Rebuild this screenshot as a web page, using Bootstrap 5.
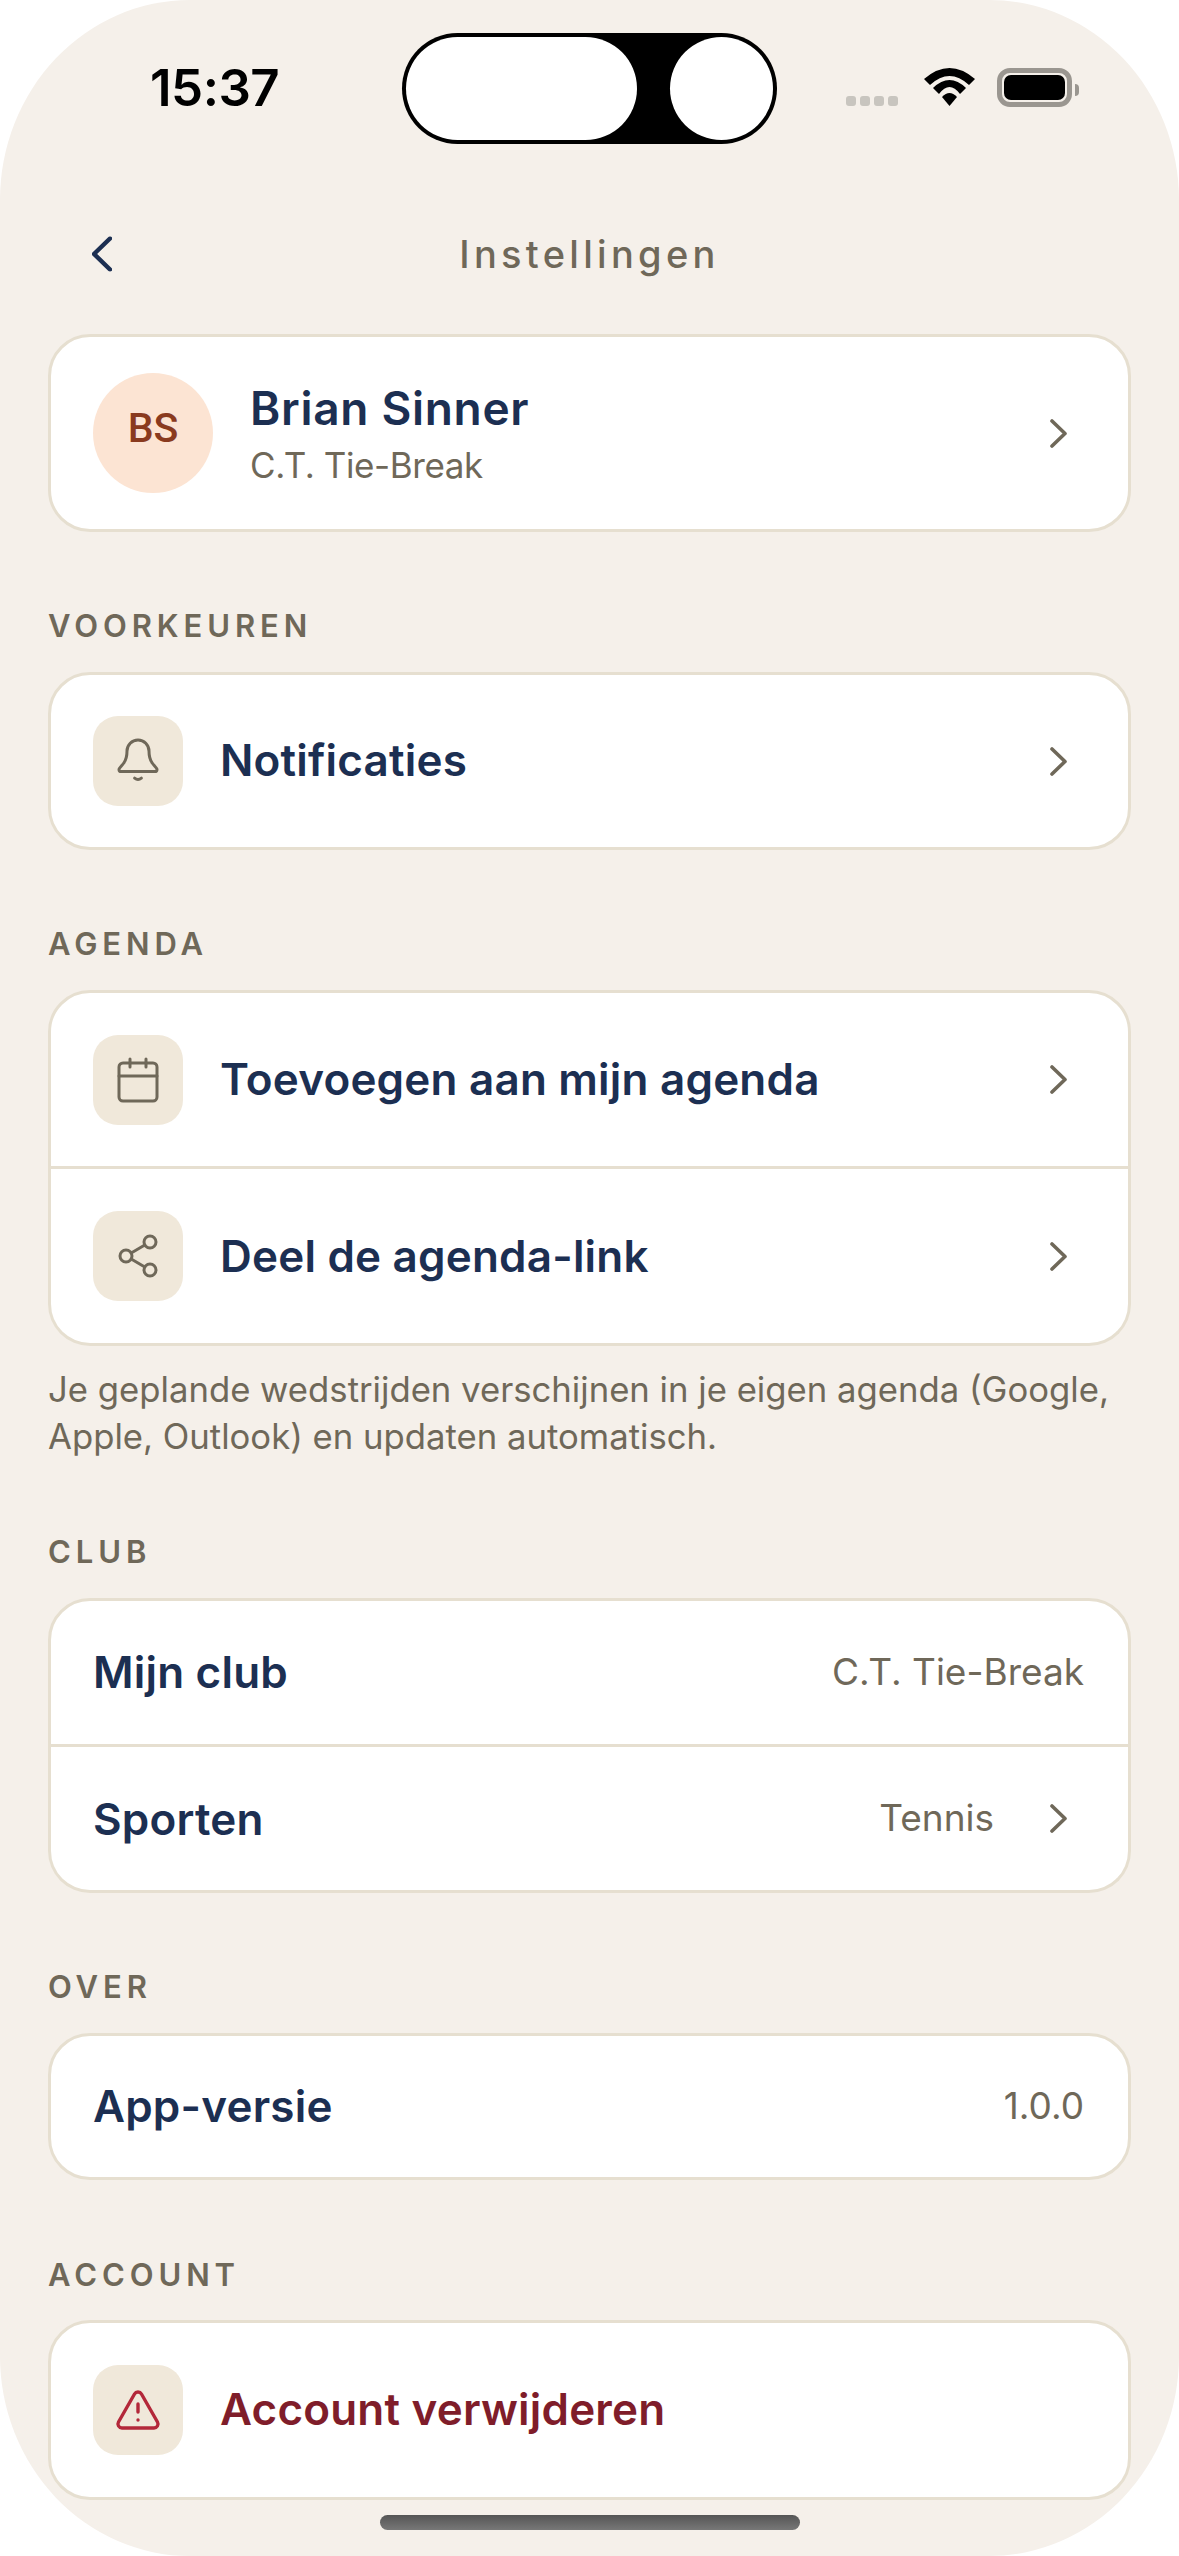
<!DOCTYPE html>
<html lang="nl">
<head>
  <meta charset="utf-8"/>
  <link href="https://cdn.jsdelivr.net/npm/bootstrap@5.3.0/dist/css/bootstrap.min.css" rel="stylesheet">
  <meta name="viewport" content="width=device-width, initial-scale=1.0"/>
  <title>Instellingen</title>
  <style>
    html, body { margin: 0; background: #fff; }
    body { font-family: Inter, "Noto Sans", sans-serif; color: #1c2f52; }
    .phone { width: 1179px; height: 2556px; background: #f5f0ea; border-radius: 190px / 200px; overflow: hidden; padding: 33px 48px 0; }
    .statusbar { display: grid; grid-template-columns: 1fr 375px 1fr; height: 111px; margin: 0 -48px; padding: 0 48px; }
    .clock { font-size: 51px; font-weight: 600; color: #000; padding-left: 102px; line-height: 1; padding-top: 29px; letter-spacing: -.5px; }
    .island { background: #000; border-radius: 56px; padding: 4px; }
    .island-pill { width: 231px; height: 103px; background: #fff; border-radius: 52px; }
    .island-dot { width: 103px; height: 103px; background: #fff; border-radius: 50%; }
    .status-icons { padding-top: 35px; padding-left: 69px; }
    .sig-dots { margin-top: 28px; margin-right: 26px; }
    .sig-dot { width: 10px; height: 10px; background: #c8c5bf; border-radius: 3px; }
    .wifi { margin-right: 22px; }
    .batt { width: 75px; height: 39px; border: 5px solid #9a9690; border-radius: 13px; padding: 2px; }
    .batt-fill { height: 100%; background: #000; border-radius: 7px; }
    .batt-nub { width: 4px; height: 12px; background: #9a9690; border-radius: 0 6px 6px 0; margin-left: 3px; }
    .topbar { height: 80px; margin-top: 70px; position: relative; }
    .page-title { font-size: 38px; font-weight: 500; letter-spacing: 4.3px; color: #6f6859; line-height: 80px; }
    .panel.list-group { --bs-list-group-bg: #fff; --bs-list-group-border-color: #e6dfd0; --bs-list-group-border-width: 3px; --bs-list-group-border-radius: 42px; }
    .panel .list-group-item { display: flex; align-items: center; padding: 0 61px 0 42px; }
    .panel-profile { margin-top: 40px; }
    .panel-profile .list-group-item { height: 198px; }
    .list-group-item.row-icon { height: 178px; }
    .list-group-item.row-icon.row-first { height: 179px; }
    .list-group-item.row-icon.row-second { height: 177px; }
    .list-group-item.row-icon.row-tall { height: 180px; }
    .panel .list-group-item.row-plain { height: 147px; padding-right: 44px; }
    .panel .list-group-item.row-plain.row-first { height: 149px; }
    .panel .list-group-item.row-plain.row-second { height: 146px; padding-right: 61px; }
    .avatar { width: 120px; height: 120px; border-radius: 50%; background: #fce4d3; color: #8a3a1e; font-family: Roboto, sans-serif; font-weight: 500; font-size: 41px; margin-right: 37px; padding-bottom: 8px; }
    .profile-name { font-size: 46px; font-weight: 600; letter-spacing: .7px; line-height: 56px; color: #1c2f52; margin-top: 2px; }
    .profile-club { font-size: 35px; letter-spacing: -.4px; line-height: 48px; color: #6f6859; margin-top: 5px; }
    .icon-box { width: 90px; height: 90px; background: #f0e8da; border-radius: 25px; margin-right: 37px; flex-shrink: 0; }
    .icon-box svg { width: 48px; height: 48px; fill: none; stroke: #6f6859; stroke-width: 1.5; stroke-linecap: round; stroke-linejoin: round; }
    .row-text { font-size: 44px; font-weight: 600; letter-spacing: .2px; color: #1c2f52; margin-top: -2px; }
    .row-second .row-text { margin-top: 0; }
    .row-danger { color: #7f1d2a; }
    .icon-box svg.icon-alert { stroke: #b3283a; stroke-width: 1.7; }
    .row-value { font-size: 37px; color: #6f6859; margin-top: -2px; }
    .chev { width: 17px; height: 29px; fill: none; stroke: #6f6859; stroke-width: 3.6; stroke-linecap: round; stroke-linejoin: round; margin-left: auto; flex-shrink: 0; }
    .chev-after { margin-left: 56px; }
    .section-block { margin-top: 74px; }
    .section-label { font-size: 31px; font-weight: 600; letter-spacing: 4.9px; color: #6f6859; line-height: 40px; margin-bottom: 26px; }
    .section-last { margin-top: 75px; }
    .section-last .section-label { margin-bottom: 25px; }
    .panel-note { font-size: 34.7px; line-height: 47px; color: #6f6859; margin: 20px 0 -2px; }
    .home-bar { width: 420px; height: 15px; border-radius: 8px; background: linear-gradient(#555, #777); margin: 15px auto 0; }
  </style>
</head>
<body>
<div class="phone">
  <div class="statusbar">
    <div class="clock">15:37</div>
    <div class="island d-flex justify-content-between">
      <div class="island-pill"></div>
      <div class="island-dot"></div>
    </div>
    <div class="status-icons d-flex align-items-start">
      <div class="sig-dots d-flex gap-1">
        <span class="sig-dot"></span><span class="sig-dot"></span><span class="sig-dot"></span><span class="sig-dot"></span>
      </div>
      <svg class="wifi" width="51" height="38" viewBox="0 0 51 38"><path d="M0 11Q25.5-11 51 11L45 17Q25.5-1 6 17Z"/><path d="M9 20Q25.5 4 42 20L36 26Q25.5 12 15 26Z"/><path d="M18 29Q25.5 21 33 29L25.5 38Z"/></svg>
      <div class="batt"><div class="batt-fill"></div></div>
      <div class="batt-nub mt-3"></div>
    </div>
  </div>

  <div class="topbar d-flex align-items-center justify-content-center">
    <svg class="position-absolute top-50 start-0 translate-middle-y" style="margin-left:44px" width="20" height="35" viewBox="0 0 20 35" fill="none" stroke="#1c2f52" stroke-width="4.5" stroke-linecap="round" stroke-linejoin="round"><path d="M18 2L2 17.5L18 33"/></svg>
    <div class="page-title">Instellingen</div>
  </div>

  <div class="panel panel-profile list-group">
    <div class="list-group-item">
      <div class="avatar d-flex align-items-center justify-content-center">BS</div>
      <div>
        <div class="profile-name">Brian Sinner</div>
        <div class="profile-club">C.T. Tie-Break</div>
      </div>
      <svg class="chev" viewBox="0 0 17 29"><path d="M2 2L15 14.5L2 27"/></svg>
    </div>
  </div>

  <div class="section-block">
    <div class="section-label">VOORKEUREN</div>
    <div class="panel list-group">
      <div class="list-group-item row-icon">
        <div class="icon-box d-flex align-items-center justify-content-center">
          <svg viewBox="0 0 24 24"><path d="M12 1.5a5.5 5.5 0 0 0-5.5 5.5c0 2.8-.6 4.6-1.6 6-.7 1-2.4 2.5-2.4 3.2 0 .6.5 1.1 1.1 1.1h16.8c.6 0 1.1-.5 1.1-1.1 0-.7-1.7-2.2-2.4-3.2-1-1.4-1.6-3.2-1.6-6A5.5 5.5 0 0 0 12 1.5z"/><path d="M10.3 20.6c1 .8 2.4.8 3.4 0"/></svg>
        </div>
        <div class="row-text">Notificaties</div>
        <svg class="chev" viewBox="0 0 17 29"><path d="M2 2L15 14.5L2 27"/></svg>
      </div>
    </div>
  </div>

  <div class="section-block">
    <div class="section-label">AGENDA</div>
    <div class="panel list-group">
      <div class="list-group-item row-icon row-first">
        <div class="icon-box d-flex align-items-center justify-content-center">
          <svg viewBox="0 0 24 24"><rect x="2.5" y="3.5" width="19" height="19" rx="2"/><path d="M2.5 10h19M8 1.5v4M16 1.5v4"/></svg>
        </div>
        <div class="row-text">Toevoegen aan mijn agenda</div>
        <svg class="chev" viewBox="0 0 17 29"><path d="M2 2L15 14.5L2 27"/></svg>
      </div>
      <div class="list-group-item row-icon row-second">
        <div class="icon-box d-flex align-items-center justify-content-center">
          <svg viewBox="0 0 24 24"><circle cx="18" cy="5" r="3"/><circle cx="6" cy="12" r="3"/><circle cx="18" cy="19" r="3"/><path d="M8.6 10.5l6.8-4M8.6 13.5l6.8 4"/></svg>
        </div>
        <div class="row-text">Deel de agenda-link</div>
        <svg class="chev" viewBox="0 0 17 29"><path d="M2 2L15 14.5L2 27"/></svg>
      </div>
    </div>
    <div class="panel-note">Je geplande wedstrijden verschijnen in je eigen agenda (Google, Apple, Outlook) en updaten automatisch.</div>
  </div>

  <div class="section-block">
    <div class="section-label">CLUB</div>
    <div class="panel list-group">
      <div class="list-group-item row-plain row-first">
        <div class="row-text">Mijn club</div>
        <div class="row-value ms-auto">C.T. Tie-Break</div>
      </div>
      <div class="list-group-item row-plain row-second">
        <div class="row-text">Sporten</div>
        <div class="row-value ms-auto">Tennis</div>
        <svg class="chev chev-after" viewBox="0 0 17 29"><path d="M2 2L15 14.5L2 27"/></svg>
      </div>
    </div>
  </div>

  <div class="section-block">
    <div class="section-label">OVER</div>
    <div class="panel list-group">
      <div class="list-group-item row-plain">
        <div class="row-text">App-versie</div>
        <div class="row-value ms-auto">1.0.0</div>
      </div>
    </div>
  </div>

  <div class="section-block section-last">
    <div class="section-label">ACCOUNT</div>
    <div class="panel list-group">
      <div class="list-group-item row-icon row-tall">
        <div class="icon-box d-flex align-items-center justify-content-center">
          <svg class="icon-alert" viewBox="0 0 24 24"><path d="M21.73 18l-8-14a2 2 0 0 0-3.48 0l-8 14A2 2 0 0 0 4 21h16a2 2 0 0 0 1.73-3z"/><path d="M12 9v4M12 17h.01"/></svg>
        </div>
        <div class="row-text row-danger">Account verwijderen</div>
      </div>
    </div>
  </div>

  <div class="home-bar"></div>
</div>
<script src="https://cdn.jsdelivr.net/npm/bootstrap@5.3.0/dist/js/bootstrap.bundle.min.js"></script>
</body>
</html>
